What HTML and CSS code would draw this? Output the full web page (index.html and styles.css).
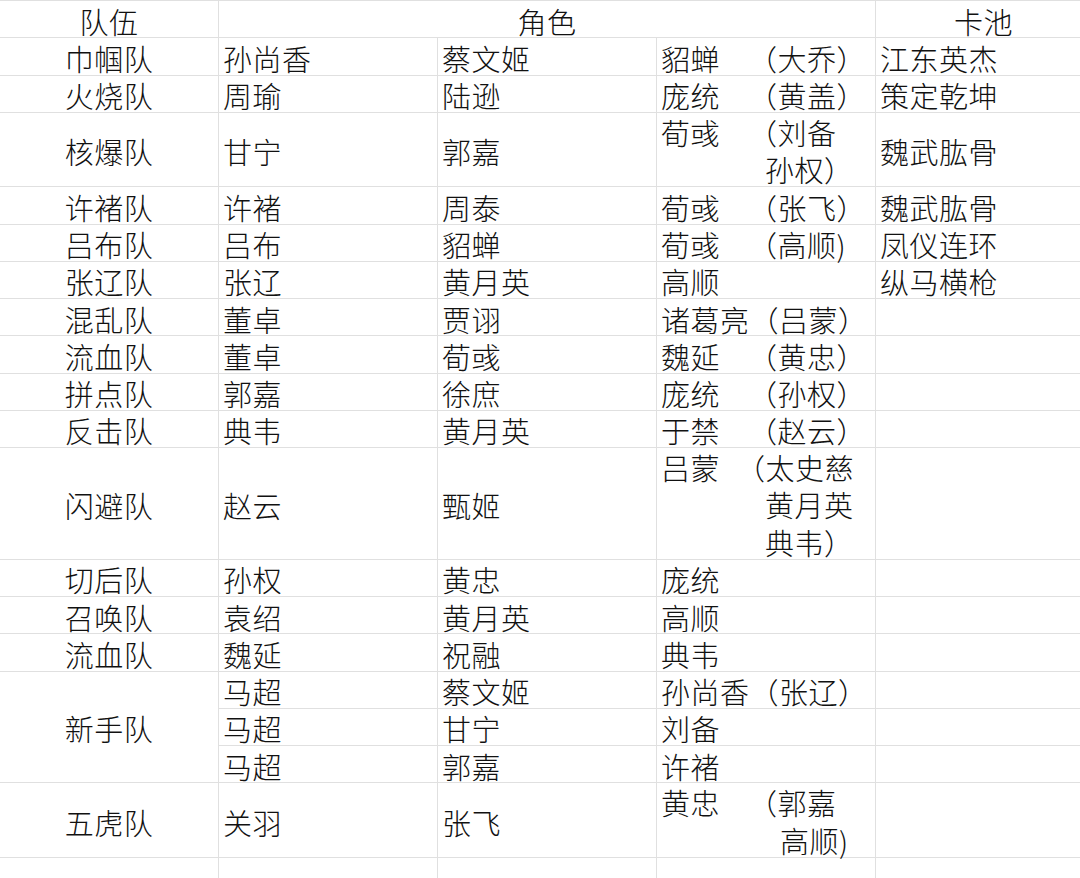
FILE: index.html
```html
<!DOCTYPE html>
<html lang="zh-CN">
<head>
<meta charset="utf-8">
<title>队伍</title>
<link rel="stylesheet" href="styles.css">
</head>
<body>
<div class="sheet">
  <div class="cell ctr">队伍</div>
  <div class="cell ctr c3">角色</div>
  <div class="cell ctr">卡池</div>

  <div class="cell ctr">巾帼队</div>
  <div class="cell">孙尚香</div>
  <div class="cell">蔡文姬</div>
  <div class="cell"><span class="nm">貂蝉</span>（大乔）</div>
  <div class="cell">江东英杰</div>

  <div class="cell ctr">火烧队</div>
  <div class="cell">周瑜</div>
  <div class="cell">陆逊</div>
  <div class="cell"><span class="nm">庞统</span>（黄盖）</div>
  <div class="cell">策定乾坤</div>

  <div class="cell ctr r2">核爆队</div>
  <div class="cell r2">甘宁</div>
  <div class="cell r2">郭嘉</div>
  <div class="cell r2 multi"><div class="ln"><span class="nm">荀彧</span>（刘备</div><div class="ln cont">孙权）</div></div>
  <div class="cell r2">魏武肱骨</div>

  <div class="cell ctr">许褚队</div>
  <div class="cell">许褚</div>
  <div class="cell">周泰</div>
  <div class="cell"><span class="nm">荀彧</span>（张飞）</div>
  <div class="cell">魏武肱骨</div>

  <div class="cell ctr">吕布队</div>
  <div class="cell">吕布</div>
  <div class="cell">貂蝉</div>
  <div class="cell"><span class="nm">荀彧</span>（高顺)</div>
  <div class="cell">凤仪连环</div>

  <div class="cell ctr">张辽队</div>
  <div class="cell">张辽</div>
  <div class="cell">黄月英</div>
  <div class="cell">高顺</div>
  <div class="cell">纵马横枪</div>

  <div class="cell ctr">混乱队</div>
  <div class="cell">董卓</div>
  <div class="cell">贾诩</div>
  <div class="cell">诸葛亮（吕蒙）</div>
  <div class="cell"></div>

  <div class="cell ctr">流血队</div>
  <div class="cell">董卓</div>
  <div class="cell">荀彧</div>
  <div class="cell"><span class="nm">魏延</span>（黄忠）</div>
  <div class="cell"></div>

  <div class="cell ctr">拼点队</div>
  <div class="cell">郭嘉</div>
  <div class="cell">徐庶</div>
  <div class="cell"><span class="nm">庞统</span>（孙权）</div>
  <div class="cell"></div>

  <div class="cell ctr">反击队</div>
  <div class="cell">典韦</div>
  <div class="cell">黄月英</div>
  <div class="cell"><span class="nm">于禁</span>（赵云）</div>
  <div class="cell"></div>

  <div class="cell ctr r3">闪避队</div>
  <div class="cell r3">赵云</div>
  <div class="cell r3">甄姬</div>
  <div class="cell r3 multi"><div class="ln"><span class="nm short">吕蒙</span>（太史慈</div><div class="ln cont">黄月英</div><div class="ln cont">典韦）</div></div>
  <div class="cell r3"></div>

  <div class="cell ctr">切后队</div>
  <div class="cell">孙权</div>
  <div class="cell">黄忠</div>
  <div class="cell">庞统</div>
  <div class="cell"></div>

  <div class="cell ctr">召唤队</div>
  <div class="cell">袁绍</div>
  <div class="cell">黄月英</div>
  <div class="cell">高顺</div>
  <div class="cell"></div>

  <div class="cell ctr">流血队</div>
  <div class="cell">魏延</div>
  <div class="cell">祝融</div>
  <div class="cell">典韦</div>
  <div class="cell"></div>

  <div class="cell ctr r3">新手队</div>
  <div class="cell">马超</div>
  <div class="cell">蔡文姬</div>
  <div class="cell">孙尚香（张辽）</div>
  <div class="cell"></div>
  <div class="cell">马超</div>
  <div class="cell">甘宁</div>
  <div class="cell">刘备</div>
  <div class="cell"></div>
  <div class="cell">马超</div>
  <div class="cell">郭嘉</div>
  <div class="cell">许褚</div>
  <div class="cell"></div>

  <div class="cell ctr r2">五虎队</div>
  <div class="cell r2">关羽</div>
  <div class="cell r2">张飞</div>
  <div class="cell r2 multi"><div class="ln"><span class="nm">黄忠</span>（郭嘉</div><div class="ln cont2">高顺)</div></div>
  <div class="cell r2"></div>

  <div class="cell"></div>
  <div class="cell"></div>
  <div class="cell"></div>
  <div class="cell"></div>
  <div class="cell"></div>
</div>
</body>
</html>
```

FILE: styles.css
```css
html, body {
  margin: 0;
  padding: 0;
  background: #ffffff;
}

body {
  width: 1080px;
  height: 878px;
  overflow: hidden;
  font-family: "Noto Sans CJK SC", "Noto Sans", sans-serif;
  font-weight: 300;
  color: #111111;
}

.sheet {
  display: grid;
  grid-template-columns: 219px 219px 219px 219px 216px;
  grid-template-rows: repeat(24, 37.26px);
  width: 1092px;
  border-top: 1px solid #e0e0e0;
}

.cell {
  box-sizing: border-box;
  display: flex;
  align-items: center;
  padding: 3px 0 0 4px;
  border-right: 1px solid #e0e0e0;
  border-bottom: 1px solid #e0e0e0;
  font-size: 29px;
  line-height: 34px;
  letter-spacing: 0.5px;
  white-space: nowrap;
  overflow: visible;
}

.ctr {
  justify-content: center;
  padding-left: 0;
}

.c3 {
  grid-column: span 3;
}

.r2 {
  grid-row: span 2;
}

.r3 {
  grid-row: span 3;
}

.multi {
  display: block;
  padding-top: 1px;
}

.ln {
  height: 37.26px;
  line-height: 37.26px;
}

.nm {
  display: inline-block;
  width: 87px;
}

.nm.short {
  width: 75px;
}

.cont {
  padding-left: 104px;
}

.cont2 {
  padding-left: 119px;
}
```
